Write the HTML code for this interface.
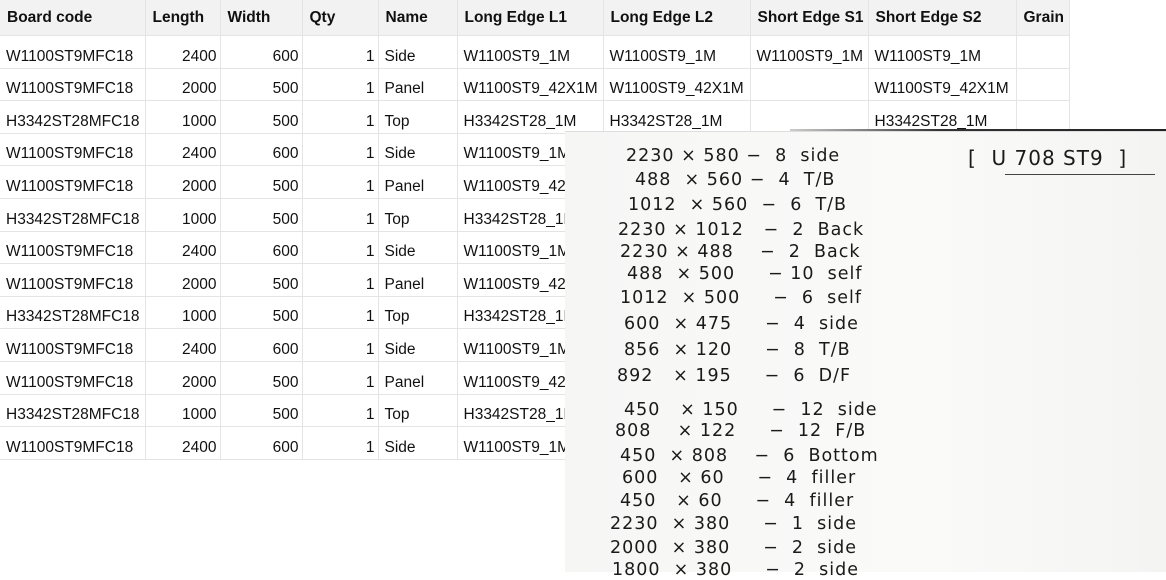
<!DOCTYPE html>
<html><head><meta charset="utf-8"><style>
body{margin:0;width:1166px;height:571px;overflow:hidden;background:#fff;position:relative;font-family:"Liberation Sans",Calibri,sans-serif}
table{position:absolute;left:0;top:0;border-collapse:collapse;font-size:15.5px;color:#111;table-layout:fixed}
td,th{height:29.6px;padding:0 3px 2px 6px;border-right:1px solid #e4e4e4;border-bottom:1px solid #e4e4e4;white-space:nowrap;overflow:hidden;vertical-align:bottom}
th{height:35px;background:#f2f2f2;text-align:left;font-weight:bold;padding:0 3px 0 7px;vertical-align:middle}
td.n{text-align:right;padding-right:3px}
.photo{position:absolute;left:565px;top:131px;width:601px;height:440px;background:linear-gradient(90deg,#f6f6f5,#fafaf9 60%,#f4f4f3);border-top:1px solid #ddd}
.dark{position:absolute;left:790px;top:129px;width:376px;height:6px;background:linear-gradient(90deg,#ccc,#333 40%,#222)}
.h{position:absolute;font-family:"DejaVu Sans",sans-serif;font-size:17.5px;color:#1a1a1a;white-space:pre;letter-spacing:1px}
</style></head><body>
<table>
<colgroup><col style="width:145px"><col style="width:75px"><col style="width:82px"><col style="width:76px"><col style="width:79px"><col style="width:146px"><col style="width:147px"><col style="width:118px"><col style="width:148px"><col style="width:53px"></colgroup>
<tr><th>Board code</th><th>Length</th><th>Width</th><th>Qty</th><th>Name</th><th>Long Edge L1</th><th>Long Edge L2</th><th>Short Edge S1</th><th>Short Edge S2</th><th>Grain</th></tr>
<tr><td>W1100ST9MFC18</td><td class=n>2400</td><td class=n>600</td><td class=n>1</td><td>Side</td><td>W1100ST9_1M</td><td>W1100ST9_1M</td><td>W1100ST9_1M</td><td>W1100ST9_1M</td><td></td></tr>
<tr><td>W1100ST9MFC18</td><td class=n>2000</td><td class=n>500</td><td class=n>1</td><td>Panel</td><td>W1100ST9_42X1M</td><td>W1100ST9_42X1M</td><td></td><td>W1100ST9_42X1M</td><td></td></tr>
<tr><td>H3342ST28MFC18</td><td class=n>1000</td><td class=n>500</td><td class=n>1</td><td>Top</td><td>H3342ST28_1M</td><td>H3342ST28_1M</td><td></td><td>H3342ST28_1M</td><td></td></tr>
<tr><td>W1100ST9MFC18</td><td class=n>2400</td><td class=n>600</td><td class=n>1</td><td>Side</td><td>W1100ST9_1M</td><td></td><td></td><td></td><td></td></tr>
<tr><td>W1100ST9MFC18</td><td class=n>2000</td><td class=n>500</td><td class=n>1</td><td>Panel</td><td>W1100ST9_42</td><td></td><td></td><td></td><td></td></tr>
<tr><td>H3342ST28MFC18</td><td class=n>1000</td><td class=n>500</td><td class=n>1</td><td>Top</td><td>H3342ST28_1M</td><td></td><td></td><td></td><td></td></tr>
<tr><td>W1100ST9MFC18</td><td class=n>2400</td><td class=n>600</td><td class=n>1</td><td>Side</td><td>W1100ST9_1M</td><td></td><td></td><td></td><td></td></tr>
<tr><td>W1100ST9MFC18</td><td class=n>2000</td><td class=n>500</td><td class=n>1</td><td>Panel</td><td>W1100ST9_42</td><td></td><td></td><td></td><td></td></tr>
<tr><td>H3342ST28MFC18</td><td class=n>1000</td><td class=n>500</td><td class=n>1</td><td>Top</td><td>H3342ST28_1M</td><td></td><td></td><td></td><td></td></tr>
<tr><td>W1100ST9MFC18</td><td class=n>2400</td><td class=n>600</td><td class=n>1</td><td>Side</td><td>W1100ST9_1M</td><td></td><td></td><td></td><td></td></tr>
<tr><td>W1100ST9MFC18</td><td class=n>2000</td><td class=n>500</td><td class=n>1</td><td>Panel</td><td>W1100ST9_42</td><td></td><td></td><td></td><td></td></tr>
<tr><td>H3342ST28MFC18</td><td class=n>1000</td><td class=n>500</td><td class=n>1</td><td>Top</td><td>H3342ST28_1M</td><td></td><td></td><td></td><td></td></tr>
<tr><td>W1100ST9MFC18</td><td class=n>2400</td><td class=n>600</td><td class=n>1</td><td>Side</td><td>W1100ST9_1M</td><td></td><td></td><td></td><td></td></tr>
</table>
<div class="dark"></div>
<div class="photo"></div>
<div class="h" style="left:626px;top:146px">2230 × 580 −  8  side</div>
<div class="h" style="left:635px;top:170px">488  × 560 −  4  T/B</div>
<div class="h" style="left:628px;top:195px">1012  × 560  −  6  T/B</div>
<div class="h" style="left:618px;top:220px">2230 × 1012   −  2  Back</div>
<div class="h" style="left:620px;top:242px">2230 × 488    −  2  Back</div>
<div class="h" style="left:627px;top:264px">488  × 500     − 10  self</div>
<div class="h" style="left:620px;top:288px">1012  × 500     −  6  self</div>
<div class="h" style="left:624px;top:314px">600  × 475     −  4  side</div>
<div class="h" style="left:624px;top:340px">856  × 120     −  8  T/B</div>
<div class="h" style="left:617px;top:366px">892   × 195     −  6  D/F</div>
<div class="h" style="left:624px;top:400px">450   × 150     −  12  side</div>
<div class="h" style="left:615px;top:421px">808    × 122     −  12  F/B</div>
<div class="h" style="left:620px;top:446px">450  × 808    −  6  Bottom</div>
<div class="h" style="left:622px;top:468px">600   × 60     −  4  filler</div>
<div class="h" style="left:620px;top:491px">450   × 60     −  4  filler</div>
<div class="h" style="left:610px;top:514px">2230  × 380     −  1  side</div>
<div class="h" style="left:610px;top:538px">2000  × 380     −  2  side</div>
<div class="h" style="left:612px;top:560px">1800  × 380     −  2  side</div>
<div class="h" style="left:968px;top:146px;font-size:20px">[  U 708 ST9  ]</div>
<div style="position:absolute;left:1005px;top:174px;width:150px;border-top:1px solid #444"></div>
</body></html>
